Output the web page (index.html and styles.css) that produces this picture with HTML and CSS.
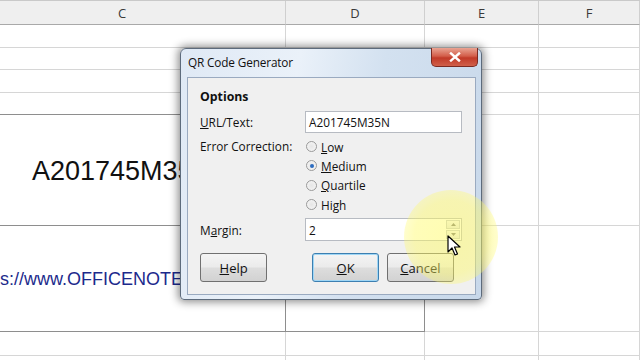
FILE: index.html
```html
<!DOCTYPE html>
<html>
<head>
<meta charset="utf-8">
<link rel="stylesheet" href="styles.css">
</head>
<body>
<div class="sheet">
  <div class="hd">C</div><div class="hd">D</div><div class="hd">E</div><div class="hd last">F</div>
  <div class="c"></div><div class="c"></div><div class="c"></div><div class="c"></div>
  <div class="c"></div><div class="c"></div><div class="c"></div><div class="c"></div>
  <div class="c"></div><div class="c"></div><div class="c"></div><div class="c"></div>
  <div class="c dkb"></div><div class="c dkb"></div><div class="c"></div><div class="c"></div>
  <div class="c dkb dkr big">A201745M35N</div><div class="c dkb dkr"></div><div class="c"></div><div class="c"></div>
  <div class="c dkb dkr url"><span class="urltext">https://www.OFFICENOTES.COM</span></div><div class="c dkb dkr"></div><div class="c"></div><div class="c"></div>
  <div class="c"></div><div class="c"></div><div class="c"></div><div class="c"></div>
  <div class="c"></div><div class="c"></div><div class="c"></div><div class="c"></div>
</div>

<div class="dialog">
  <div class="titlebar">
    <span class="title">QR Code Generator</span>
    <span class="close"><svg width="12" height="10" viewBox="0 0 12 10"><path d="M2 1.5 L10 8.5 M10 1.5 L2 8.5" stroke="#fff" stroke-width="2.4" stroke-linecap="square"/></svg></span>
  </div>
  <div class="panel">
    <div class="heading">Options</div>
    <div class="row urlrow">
      <span class="lbl"><u>U</u>RL/Text:</span>
      <span class="input">A201745M35N</span>
    </div>
    <div class="row ecrow">
      <span class="lbl">Error Correction:</span>
      <div class="radios">
        <div class="radio"><span class="dot"></span><span><u>L</u>ow</span></div>
        <div class="radio"><span class="dot on"></span><span><u>M</u>edium</span></div>
        <div class="radio"><span class="dot"></span><span><u>Q</u>uartile</span></div>
        <div class="radio"><span class="dot"></span><span>Hi<u>g</u>h</span></div>
      </div>
    </div>
    <div class="row marginrow">
      <span class="lbl">M<u>a</u>rgin:</span>
      <span class="input spin">2
        <span class="spinbtns"><span class="sb"><svg width="5" height="3" viewBox="0 0 5 3"><path d="M0 3 L2.5 0 L5 3Z" fill="#777"/></svg></span><span class="sb"><svg width="5" height="3" viewBox="0 0 5 3"><path d="M0 0 L2.5 3 L5 0Z" fill="#777"/></svg></span></span>
      </span>
    </div>
    <div class="buttons">
      <span class="btn"><u>H</u>elp</span>
      <span class="gap"></span>
      <span class="btn ok"><u>O</u>K</span>
      <span class="btn"><u>C</u>ancel</span>
    </div>
  </div>
</div>

<div class="glow"></div>
<svg class="cursor" width="14" height="22" viewBox="0 0 14 22"><path d="M1 1 L1 17 L5 13 L8 20 L10.5 19 L7.5 12 L13 12 Z" fill="#fff" stroke="#000" stroke-width="1.2" stroke-linejoin="round"/></svg>
</body>
</html>
```

FILE: styles.css
```css
html, body {
  margin: 0;
  padding: 0;
  width: 640px;
  height: 360px;
  overflow: hidden;
  background: #fff;
}

.sheet {
  display: grid;
  margin-left: -41px;
  grid-template-columns: 327px 139px 114px 101px;
  grid-template-rows: 24px 23px 22px 23px 22px 111px 106px 24px 5px;
  border-top: 1px solid #c9c9c9;
  font-family: "Liberation Sans", Arial, sans-serif;
}

.hd {
  background: #efefef;
  border-right: 1px solid #cfcfcf;
  border-bottom: 1px solid #a9a9a9;
  display: flex;
  align-items: center;
  justify-content: center;
  font-family: "Open Sans", sans-serif;
  font-size: 13px;
  color: #3a3a3a;
  padding-top: 1px;
  box-sizing: border-box;
}

.c {
  border-right: 1px solid #d6d6d6;
  border-bottom: 1px solid #d6d6d6;
  box-sizing: border-box;
  overflow: hidden;
  white-space: nowrap;
}

.dkb { border-bottom-color: #8e8e8e; }
.dkr { border-right-color: #8e8e8e; }

.big {
  display: flex;
  align-items: center;
  justify-content: center;
  font-size: 27px;
  color: #111;
  padding-top: 2px;
}

.url {
  display: flex;
  align-items: center;
  padding-left: 11px;
  font-size: 18px;
  color: #1c2a8c;
  padding-top: 2px;
}

.urltext {
  width: 211px;
  overflow: hidden;
  flex: none;
}

/* dialog */
.dialog {
  position: absolute;
  left: 180px;
  top: 48px;
  width: 302px;
  height: 252px;
  box-sizing: border-box;
  border: 1px solid #5d6b7c;
  border-radius: 6px 6px 4px 4px;
  background: linear-gradient(100deg, #dfe9f5 0%, #eaf1f9 35%, #d3e1f0 60%, #c8d8ea 100%);
  box-shadow: 0 0 9px 2px rgba(0,0,0,0.45);
  display: flex;
  flex-direction: column;
  font-family: "Open Sans", sans-serif;
  font-size: 11.8px;
  color: #111;
}

.titlebar {
  height: 28px;
  display: flex;
  align-items: flex-start;
  justify-content: space-between;
  padding-left: 7px;
  flex: none;
}

.title {
  margin-top: 5px;
  letter-spacing: -0.15px;
}

.close {
  width: 47px;
  height: 19px;
  margin-right: 3px;
  margin-top: -1px;
  box-sizing: border-box;
  border: 1px solid #7b2a21;
  border-top: none;
  border-radius: 0 0 5px 5px;
  background: linear-gradient(#e9a493 0%, #d35e4a 45%, #c13a28 55%, #d0604a 100%);
  display: flex;
  align-items: center;
  justify-content: center;
}

.panel {
  flex: 1;
  margin: 0 5px 4px 6px;
  background: #f0f0f0;
  border: 1px solid #9aaac0;
  padding: 11px 13px 0 12px;
  display: flex;
  flex-direction: column;
}

.heading {
  font-weight: bold;
  font-size: 12.3px;
  line-height: 16px;
}

.row {
  display: flex;
}

.lbl {
  width: 105px;
  flex: none;
}

.urlrow {
  margin-top: 6px;
  align-items: center;
}

.input {
  width: 157px;
  height: 22px;
  box-sizing: border-box;
  background: #fff;
  border: 1px solid #b7bbc2;
  padding-left: 3px;
  display: flex;
  align-items: center;
}

.ecrow {
  margin-top: 4px;
  align-items: flex-start;
}

.ecrow .lbl {
  line-height: 19px;
}

.radios {
  display: flex;
  flex-direction: column;
  padding-left: 1px;
}

.radio {
  height: 19.3px;
  display: flex;
  align-items: center;
  gap: 4px;
}

.dot {
  width: 9px;
  height: 9px;
  border-radius: 50%;
  border: 1px solid #9a9a9a;
  background: radial-gradient(circle, #e6e6e6 0%, #f7f7f7 100%);
  display: flex;
  align-items: center;
  justify-content: center;
}

.dot.on::after {
  content: "";
  width: 4px;
  height: 4px;
  border-radius: 50%;
  background: #2c6cc0;
}

.marginrow {
  margin-top: 4px;
  align-items: center;
}

.spin {
  height: 23px;
  justify-content: space-between;
  padding-right: 1px;
}

.spinbtns {
  display: flex;
  flex-direction: column;
  gap: 1px;
}

.sb {
  width: 14px;
  height: 9px;
  box-sizing: border-box;
  border: 1px solid #c7cbd0;
  background: linear-gradient(#f6f6f6, #e6e8ea);
  display: flex;
  align-items: center;
  justify-content: center;
}

.buttons {
  display: flex;
  margin-top: 12px;
}

.gap { width: 40px; }

.btn {
  width: 72px;
  height: 29px;
  box-sizing: border-box;
  border: 1px solid #707070;
  border-radius: 3px;
  background: linear-gradient(#f4f4f4 0%, #ebebeb 48%, #dddddd 52%, #d2d2d2 100%);
  display: flex;
  align-items: center;
  justify-content: center;
  font-size: 13px;
  margin-right: 8px;
}

.btn.ok {
  width: 71px;
  border-color: #3c7fb1;
  box-shadow: inset 0 0 0 1px #9fd6f5;
}

/* overlays */
.glow {
  position: absolute;
  left: 404px;
  top: 190px;
  width: 94px;
  height: 94px;
  border-radius: 50%;
  background: radial-gradient(circle, rgba(255,250,100,0.5) 0%, rgba(255,250,100,0.45) 55%, rgba(255,250,110,0.22) 85%, rgba(255,255,120,0) 100%);
}

.cursor {
  position: absolute;
  left: 447px;
  top: 235px;
}
```
